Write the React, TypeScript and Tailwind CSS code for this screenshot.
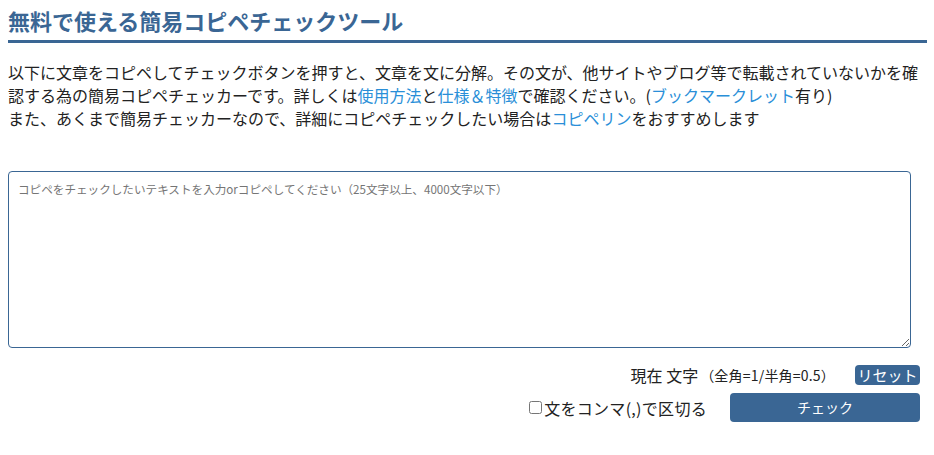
export default function App() {
  return (
    <div
      className="w-[919px] ml-2 text-[#222] bg-white"
      style={{ fontFamily: '"Noto Sans CJK JP", "Noto Sans", sans-serif' }}
    >
      {/* Title */}
      <h1 className="pt-[4px] pb-[3px] border-b-[3px] border-[#3a6694] text-[22px] leading-[33px] font-bold text-[#3a6694]">
        無料で使える簡易コピペチェックツール
      </h1>

      {/* Description */}
      <p className="mt-[18px] text-[16px] leading-[23px]">
        以下に文章をコピペしてチェックボタンを押すと、文章を文に分解。その文が、他サイトやブログ等で転載されていないかを確認する為の簡易コピペチェッカーです。詳しくは
        <a className="text-[#2a8fd8]">使用方法</a>と<a className="text-[#2a8fd8]">仕様＆特徴</a>で確認ください。(
        <a className="text-[#2a8fd8]">ブックマークレット</a>有り)
        <br />
        また、あくまで簡易チェッカーなので、詳細にコピペチェックしたい場合は
        <a className="text-[#2a8fd8]">コピペリン</a>をおすすめします
      </p>

      {/* Input */}
      <textarea
        className="block mt-[41px] w-[903px] h-[177px] px-[9px] py-[9px] border border-[#3a6694] rounded-[4px] text-[11.6px] leading-[16px] placeholder:text-[#757575] outline-none resize-y"
        style={{ fontFamily: '"Noto Sans CJK JP", monospace' }}
        placeholder="コピペをチェックしたいテキストを入力orコピペしてください（25文字以上、4000文字以下）"
      />

      {/* Counter + reset */}
      <div className="flex items-center justify-end pr-[7px] mt-[17px] h-[20px]">
        <span className="text-[16px] leading-[20px]">現在 文字</span>
        <span className="text-[14px] leading-[20px] ml-[2px] tracking-[0.2px]">（全角=1/半角=0.5）</span>
        <button className="ml-[20px] w-[65px] h-[20px] rounded-[4px] bg-[#3a6694] text-white text-[15px] leading-[20px]">
          リセット
        </button>
      </div>

      {/* Comma option + check */}
      <div className="flex items-center justify-end pr-[7px] mt-[8px]">
        <label className="flex items-center text-[16px] leading-[20px] tracking-[0.3px]">
          <input type="checkbox" className="w-[13px] h-[13px] mr-[2px]" />
          文をコンマ(,)で区切る
        </label>
        <button className="ml-[23px] w-[190px] h-[29px] rounded-[4px] bg-[#3a6694] text-white text-[14px]">
          チェック
        </button>
      </div>
    </div>
  );
}
